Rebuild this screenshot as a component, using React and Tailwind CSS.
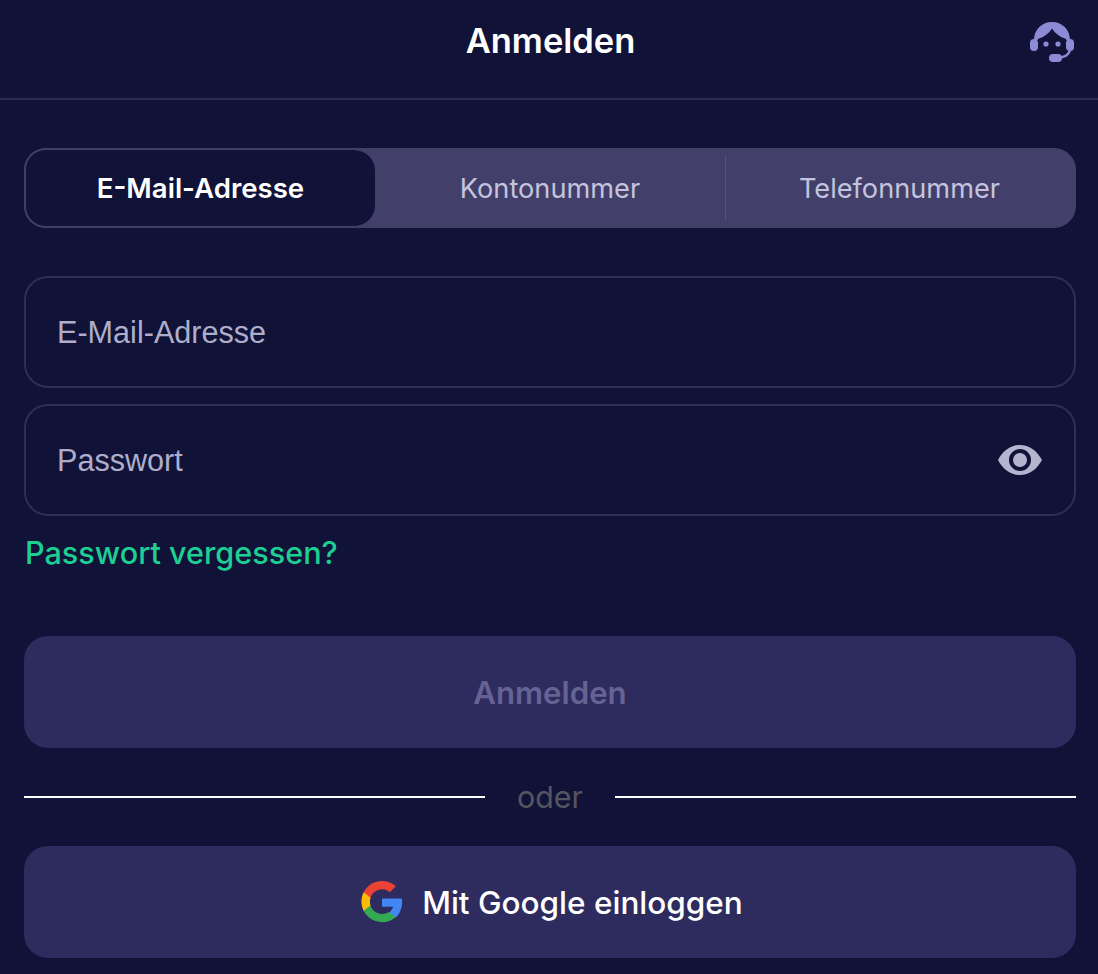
import React from 'react';

const SupportIcon = () => (
    <svg width="46" height="46" viewBox="0 0 46 46" fill="none">
        <path d="M4 20C4 9.500 12 2 22 2s18 7.500 18 18h-3.500c-.2-.6-.5-1-1-1.200-5.500-1.800-10.500-5.300-13.500-10.300-3 5-8 8.500-13.500 10.300-.5.200-.8.600-1 1.200H4Z" fill="#8d8ad6" />
        <rect x="0" y="19" width="8" height="12" rx="4" fill="#8d8ad6" />
        <rect x="36" y="19" width="8" height="12" rx="4" fill="#8d8ad6" />
        <circle cx="16" cy="24" r="2.600" fill="#8d8ad6" />
        <circle cx="28" cy="24" r="2.600" fill="#8d8ad6" />
        <path d="M40 30c-1 4.500-6 7.500-13 8" stroke="#8d8ad6" strokeWidth="2.500" />
        <rect x="19" y="34" width="13" height="8" rx="4" fill="#8d8ad6" />
    </svg>
);

const EyeIcon = () => (
    <svg width="46" height="32" viewBox="0 0 46 32" className="shrink-0">
        <path fillRule="evenodd" d="M1 16C6 6.500 14 1 23 1s17 5.500 22 15c-5 9.500-13 15-22 15S6 25.500 1 16Zm22 11a11 11 0 1 0 0-22 11 11 0 0 0 0 22Z" fill="#b5b4cf" />
        <circle cx="23" cy="16" r="7" fill="#b5b4cf" />
    </svg>
);

const GoogleIcon = () => (
    <svg width="42" height="42" viewBox="0 0 48 48">
        <path fill="#4285F4" d="M47 24.500c0-1.600-.1-3.100-.4-4.500H24v9.500h12.700c-.6 2.600-2.200 4.700-4.700 6.400v5.900h7.600c4.400-4.100 7.400-10.100 7.400-17.300Z" />
        <path fill="#34A853" d="M24 47c6.300 0 11.700-2.100 15.600-5.700L32 35.400c-2.100 1.400-4.800 2.300-8 2.300-6.100 0-11.300-4.100-13.100-9.700H3v6.100C6.900 41.800 14.800 47 24 47Z" />
        <path fill="#FBBC05" d="M10.900 28c-.5-1.400-.7-2.900-.7-4.500s.3-3.100.7-4.500v-6.100H3C1.400 16.100.5 19.700.5 23.500S1.400 30.900 3 34.100l7.900-6.100Z" />
        <path fill="#EA4335" d="M24 9.300c3.500 0 6.600 1.200 9 3.500l6.800-6.800C35.700 2.200 30.300 0 24 0 14.800 0 6.900 5.200 3 12.900l7.900 6.100C12.700 13.400 17.900 9.300 24 9.300Z" />
    </svg>
);

const App = () => {
    return (
        <div className="min-h-[974px] bg-[#111238] font-['Inter','Liberation_Sans',sans-serif] overflow-hidden">
            {/* Header */}
            <div className="relative flex h-[100px] items-center justify-center border-b-2 border-[#2a2b50] pb-[17px] pl-[3px]">
                <h1 className="text-[34.500px] font-semibold text-white">Anmelden</h1>
                <div className="absolute right-[22px] top-[20px]">
                    <SupportIcon />
                </div>
            </div>

            <div className="flex flex-col pl-6 pr-[22px] pt-12">
                {/* Tabs */}
                <div className="flex h-20 items-center rounded-[22px] bg-[#42406a] text-[27.200px] text-[#c4c4de]">
                    <div className="flex h-20 w-[351px] shrink-0 items-center justify-center rounded-[22px] border-2 border-r-0 border-[#3d3e66] bg-[#111238] pt-0.5 text-[27.600px] font-semibold text-white">
                        E-Mail-Adresse
                    </div>
                    <div className="flex h-16 flex-1 items-center justify-center border-r border-[#56557c] pt-0.5">Kontonummer</div>
                    <div className="flex h-16 flex-1 items-center justify-center pt-0.5">
                        <span className="mr-[3px]">Telefonnummer</span>
                    </div>
                </div>

                {/* Fields */}
                <div className="mt-12 flex h-28 items-center rounded-3xl border-2 border-[#2e2f55] px-[31px] pt-0.5">
                    <input placeholder="E-Mail-Adresse" className="w-full bg-transparent font-['Liberation_Sans',sans-serif] text-[30.600px] text-white outline-none placeholder:text-[#aeaeca]" />
                </div>
                <div className="mt-4 flex h-28 items-center rounded-3xl border-2 border-[#2e2f55] px-[31px]">
                    <input placeholder="Passwort" className="mt-0.5 w-full bg-transparent font-['Liberation_Sans',sans-serif] text-[30.600px] text-white outline-none placeholder:text-[#aeaeca]" />
                    <EyeIcon />
                </div>
                <a className="ml-px mt-[19px] text-[30.600px] font-medium leading-9 text-[#1dcf92]">Passwort vergessen?</a>

                <button className="mt-[65px] h-28 rounded-3xl bg-[#2e2b5e] pt-0.5 text-[31.200px] font-semibold text-[#656394]">Anmelden</button>

                {/* Divider */}
                <div className="mt-[33px] flex h-8 items-center">
                    <div className="h-0.5 flex-1 bg-white" />
                    <span className="w-[130px] pt-0.5 text-center text-[30.400px] text-[#55555f]">oder</span>
                    <div className="h-0.5 flex-1 bg-white" />
                </div>

                <button className="mt-[33px] flex h-28 items-center justify-center gap-[19px] rounded-3xl bg-[#2e2b5e] pl-1 text-[31.500px] font-medium text-white">
                    <GoogleIcon />
                    <span className="pt-0.5">Mit Google einloggen</span>
                </button>
            </div>
        </div>
    );
};

export default App;
